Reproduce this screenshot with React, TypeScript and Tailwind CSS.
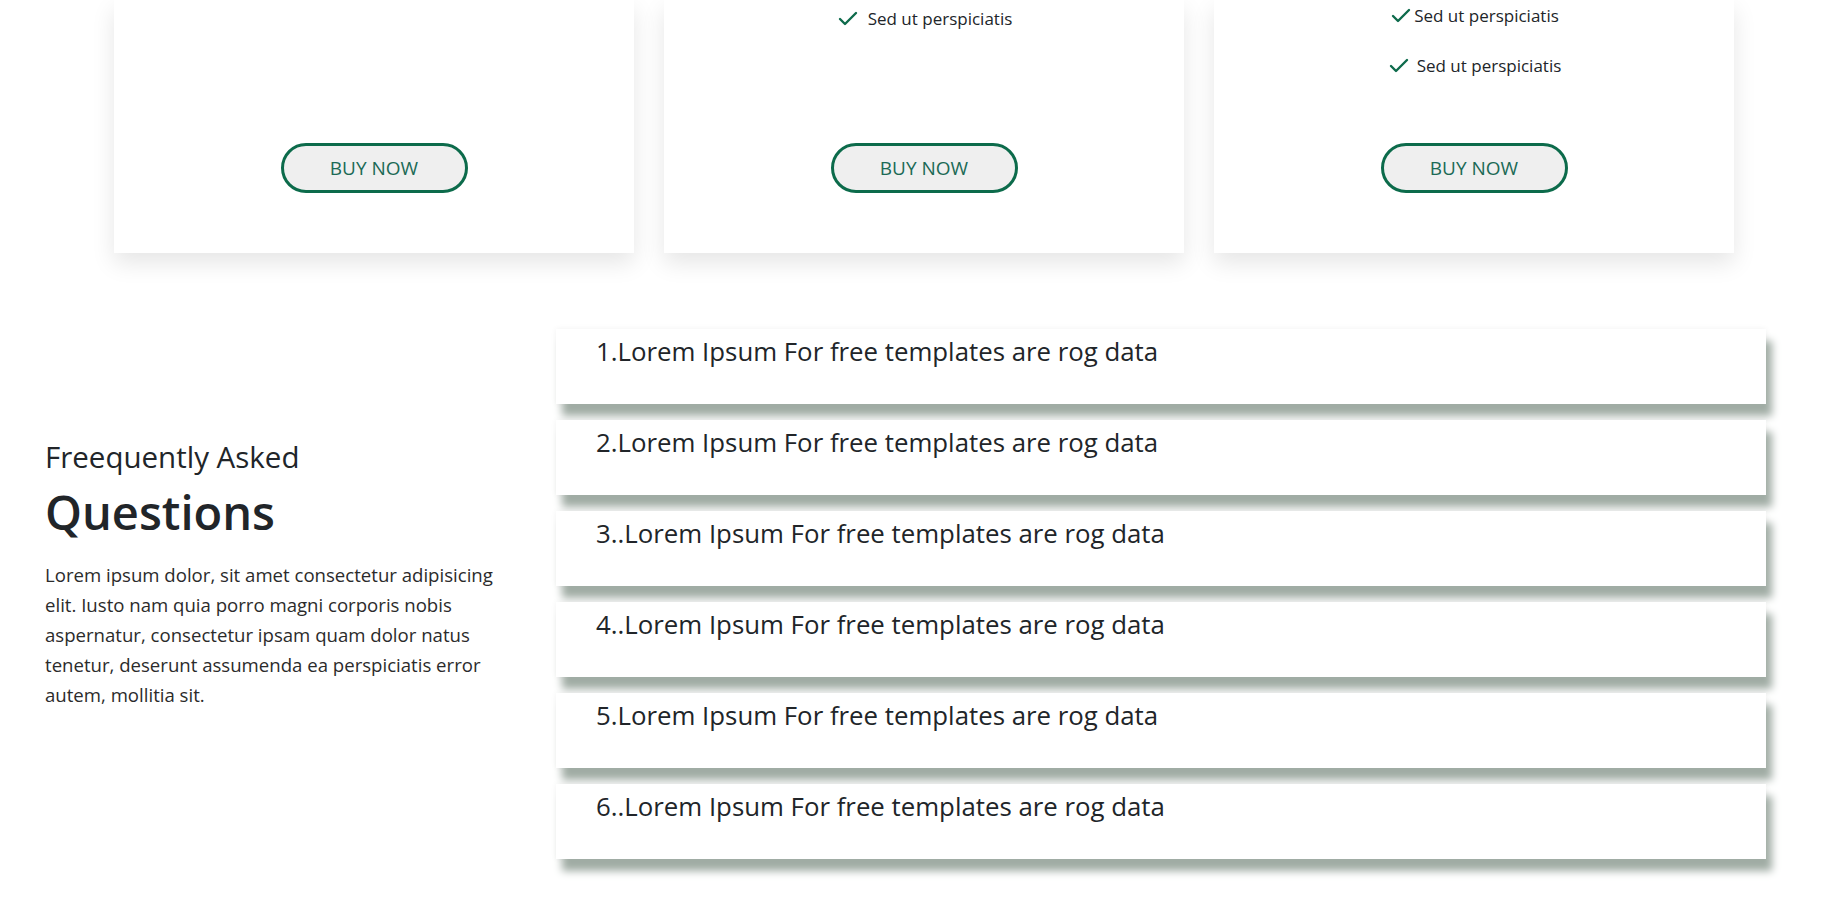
import React from "react";

const Check = () => (
  <svg width="24" height="24" viewBox="0 0 24 24" fill="none" stroke="#0e6b4c" strokeWidth="2.4" strokeLinecap="round" strokeLinejoin="round">
    <path d="M20 6 9 17l-5-5" />
  </svg>
);

const Item = ({ gap }: { gap: string }) => (
  <div className={`flex items-center justify-center ${gap}`}>
    <Check />
    <span className="text-[17px] leading-[24px] text-[#212529]">Sed ut perspiciatis</span>
  </div>
);

const BuyButton = () => (
  <button className="w-[187px] h-[50px] rounded-full border-[3px] border-[#0c6b4b] bg-[#efefef] text-[19px] text-[#1b6a56]">
    BUY NOW
  </button>
);

const faqs = [
  "1.Lorem Ipsum For free templates are rog data",
  "2.Lorem Ipsum For free templates are rog data",
  "3..Lorem Ipsum For free templates are rog data",
  "4..Lorem Ipsum For free templates are rog data",
  "5.Lorem Ipsum For free templates are rog data",
  "6..Lorem Ipsum For free templates are rog data",
];

export default function App() {
  return (
    <div className="min-h-screen bg-white font-['Open_Sans',sans-serif] text-[#212529] overflow-hidden">
      {/* Pricing cards (lower part) */}
      <div className="flex gap-[30px] pl-[114px]">
        <div className="w-[520px] h-[253px] bg-white shadow-[0_10px_22px_rgba(0,0,0,0.10)] flex flex-col items-center">
          <div className="mt-auto mb-[60px]">
            <BuyButton />
          </div>
        </div>
        <div className="w-[520px] h-[253px] bg-white shadow-[0_10px_22px_rgba(0,0,0,0.10)] flex flex-col items-center pt-[7px]">
          <Item gap="gap-[8px]" />
          <div className="mt-auto mb-[60px]">
            <BuyButton />
          </div>
        </div>
        <div className="w-[520px] h-[253px] bg-white shadow-[0_10px_22px_rgba(0,0,0,0.10)] flex flex-col items-center pt-[4px]">
          <div className="flex flex-col gap-[26px]">
            <Item gap="gap-[1px]" />
            <Item gap="gap-[6px]" />
          </div>
          <div className="mt-auto mb-[60px]">
            <BuyButton />
          </div>
        </div>
      </div>

      {/* FAQ */}
      <div className="flex mt-[76px] pl-[45px] pr-[71px] pb-[60px]">
        <div className="w-[511px] shrink-0 pt-[110px]">
          <h3 className="text-[29.5px] leading-[35px] font-normal">Freequently Asked</h3>
          <h2 className="text-[47px] leading-[58px] font-semibold mt-[9px]">Questions</h2>
          <p className="w-[476px] text-[18.6px] leading-[30px] mt-[19px] text-[#2b2b2b]">
            Lorem ipsum dolor, sit amet consectetur adipisicing elit. Iusto nam quia porro magni corporis nobis aspernatur, consectetur ipsam quam dolor natus tenetur, deserunt assumenda ea perspiciatis error autem, mollitia sit.
          </p>
        </div>
        <div className="flex-1 flex flex-col gap-[16px]">
          {faqs.map((q) => (
            <div
              key={q}
              className="h-[75px] bg-white pl-[40px] pt-[7px] shadow-[6px_12px_8px_#a0aca4,0_0_6px_rgba(0,0,0,0.06)]"
            >
              <h4 className="text-[25.8px] leading-[31px] font-normal text-[#212529]">{q}</h4>
            </div>
          ))}
        </div>
      </div>
    </div>
  );
}
